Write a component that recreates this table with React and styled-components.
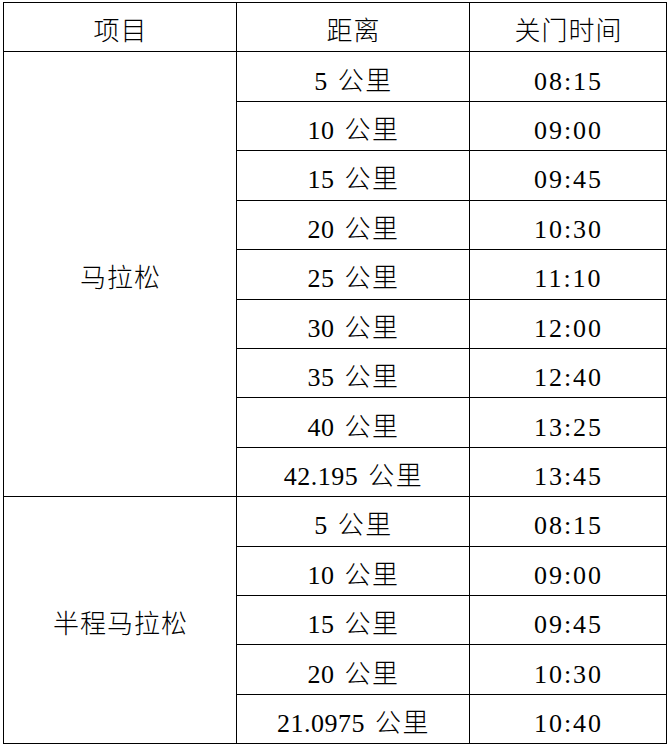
import React from "react";
import styled, { createGlobalStyle } from "styled-components";

const GlobalStyle = createGlobalStyle`
  html, body {
    margin: 0;
    padding: 0;
    background: #ffffff;
  }
`;

const Page = styled.div`
  padding: 2px 0 0 3px;
`;

const Table = styled.table`
  border-collapse: collapse;
  width: 663px;
  table-layout: fixed;
  font-family: "Liberation Serif", "Noto Sans CJK SC", serif;
  font-size: 26px;
  font-weight: 300;
  color: #000;
`;

const Row = styled.tr`
  height: 49.43px;
`;

const Cell = styled.td`
  border: 1px solid #000;
  text-align: center;
  vertical-align: middle;
  padding: 10px 0 0 1px;
  letter-spacing: ${(p) => p.$spacing || "0.5px"};
  white-space: nowrap;
  line-height: 1;
`;

const HeadCell = styled(Cell).attrs({ as: "th" })`
  font-weight: 300;
  letter-spacing: 1px;
`;

const Unit = styled.span`
  margin-left: 3px;
  letter-spacing: 1.5px;
`;

const groups = [
  {
    name: "马拉松",
    rows: [
      ["5", "08:15"],
      ["10", "09:00"],
      ["15", "09:45"],
      ["20", "10:30"],
      ["25", "11:10"],
      ["30", "12:00"],
      ["35", "12:40"],
      ["40", "13:25"],
      ["42.195", "13:45"],
    ],
  },
  {
    name: "半程马拉松",
    rows: [
      ["5", "08:15"],
      ["10", "09:00"],
      ["15", "09:45"],
      ["20", "10:30"],
      ["21.0975", "10:40"],
    ],
  },
];

export default function App() {
  return (
    <Page>
      <GlobalStyle />
      <Table>
        <colgroup>
          <col style={{ width: 233 }} />
          <col style={{ width: 233 }} />
          <col style={{ width: 197 }} />
        </colgroup>
        <thead>
          <Row>
            <HeadCell>项目</HeadCell>
            <HeadCell>距离</HeadCell>
            <HeadCell>关门时间</HeadCell>
          </Row>
        </thead>
        <tbody>
          {groups.map((g) =>
            g.rows.map(([dist, time], i) => (
              <Row key={g.name + dist}>
                {i === 0 && (
                  <Cell rowSpan={g.rows.length} $spacing="1px">
                    {g.name}
                  </Cell>
                )}
                <Cell>
                  {dist} <Unit>公里</Unit>
                </Cell>
                <Cell $spacing="2px">{time}</Cell>
              </Row>
            ))
          )}
        </tbody>
      </Table>
    </Page>
  );
}
